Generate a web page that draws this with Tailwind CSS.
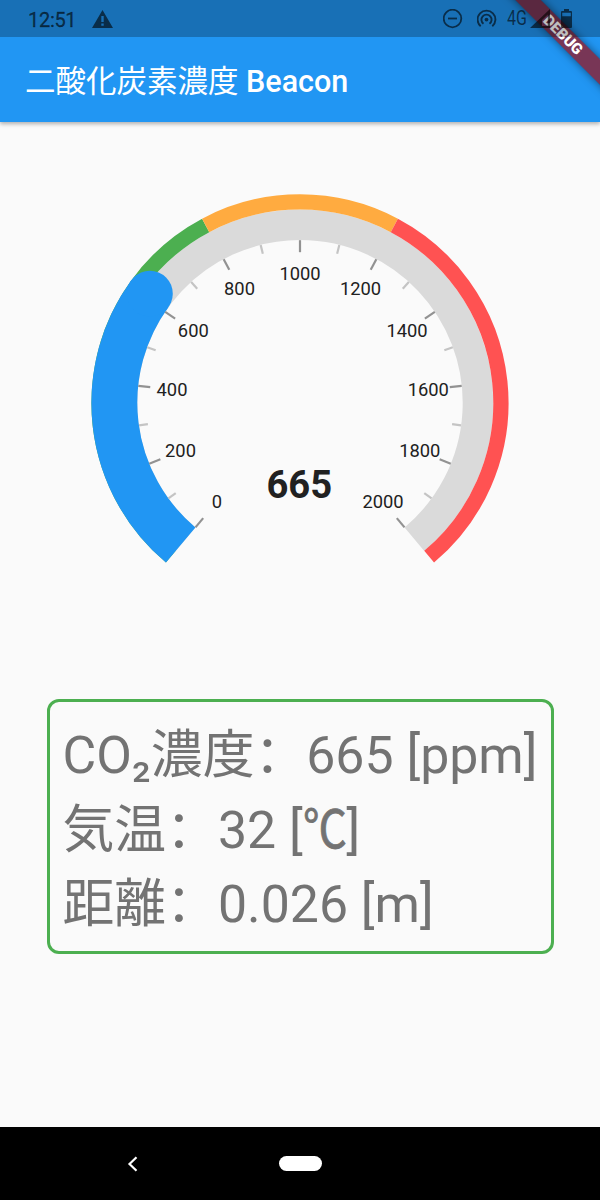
<!DOCTYPE html>
<html lang="ja">
<head>
  <meta charset="UTF-8">
  <meta name="viewport" content="width=device-width, initial-scale=1.0">
  <title>二酸化炭素濃度 Beacon</title>
  <script src="https://cdn.jsdelivr.net/npm/@tailwindcss/browser@4"></script>
</head>
<body class="relative flex flex-col h-[1200px] w-[600px] overflow-hidden bg-[#fafafa] font-['Roboto','Noto_Sans_CJK_SC',sans-serif]">

  <!-- app bar -->
  <header class="flex items-center h-[122px] shrink-0 bg-[#2196f3] pt-[37px] pl-[25px] shadow-[0_2px_4px_rgba(0,0,0,0.3)]">
    <h1 class="text-[30.5px] font-medium leading-none text-white whitespace-nowrap pt-[5px]"><span class="font-normal">二酸化炭素濃度</span> Beacon</h1>
  </header>

  <!-- debug ribbon -->
  <div class="absolute right-0 top-0 w-[160px] h-[120px] overflow-hidden">
    <div class="absolute left-[23.5px] top-[27.35px] w-[200px] h-[18.3px] rotate-45 bg-[#951521]/75 shadow-[0_0_9px_rgba(0,0,0,0.5)] text-center text-[15.2px] leading-[18.3px] font-black text-white pr-[3px]">DEBUG</div>
  </div>

  <!-- status bar, translucent over the app -->
  <div class="absolute top-0 left-0 flex items-center h-[37px] w-full bg-black/25 pl-7 pr-[28px]">
    <span class="text-[20px] leading-none pt-[2px] w-[64px] text-black/60 tracking-[-0.3px] [-webkit-text-stroke:0.3px]">12:51</span>
    <svg class="w-[21px] h-[18px] text-black/60" viewBox="0 0 21 18">
      <path fill="currentColor" fill-rule="evenodd" d="M10.5 0 21 18H0zM9.3 6v6h2.4V6zM9.3 13.5v2.2h2.4v-2.2z"/>
    </svg>
    <div class="flex items-center ml-auto text-black/60">
      <svg class="w-5 h-5" viewBox="0 0 20 20" fill="none" stroke="currentColor" stroke-width="1.8">
        <circle cx="9.5" cy="9.5" r="8.8"/>
        <path d="M5 9.5h9"/>
      </svg>
      <svg class="w-5 h-5 ml-[14px]" viewBox="0 0 20 20" fill="none" stroke="currentColor" stroke-width="1.9">
        <circle cx="9.5" cy="10.6" r="1.9" fill="currentColor" stroke="none"/>
        <path d="M6.500 14.800a5.100 5.100 0 1 1 6 0"/>
        <path d="M3.700 17.300A8.900 8.900 0 1 1 15.300 17.300"/>
      </svg>
      <span class="ml-[10px] w-[23px] text-[19.5px] leading-none whitespace-nowrap origin-left scale-x-82">4G</span>
      <svg class="w-5 h-5" viewBox="0 0 20 20">
        <path fill="currentColor" fill-rule="evenodd" d="M0 19 20 0v19zM17.800 5.500 12 11v6h5.800z"/>
      </svg>
      <svg class="w-[11px] h-[19px] ml-[11px]" viewBox="0 0 11 19">
        <path fill="currentColor" fill-rule="evenodd" d="M3 0h5v2h2q1 0 1 1v15q0 1-1 1H1q-1 0-1-1V3q0-1 1-1h2zM1.200 3.800v3.400h8.600V3.800z"/>
      </svg>
    </div>
  </div>

  <main class="flex flex-col grow">
    <svg class="w-[600px] h-[500px] shrink-0" viewBox="0 122 600 500">
      <g id="arcs" fill="none"></g>
      <g id="ticks"></g>
      <g class="text-[18.33px]" fill="#212121" text-anchor="middle">
        <text x="217" y="507.5">0</text>
        <text x="180.5" y="457">200</text>
        <text x="172" y="395.6">400</text>
        <text x="193.3" y="336.8">600</text>
        <text x="239.5" y="295">800</text>
        <text x="300" y="280">1000</text>
        <text x="360.5" y="295">1200</text>
        <text x="407" y="336.8">1400</text>
        <text x="428.3" y="395.6">1600</text>
        <text x="419.8" y="457">1800</text>
        <text x="383" y="507.5">2000</text>
      </g>
      <text x="299.3" y="498" class="text-[38.2px] font-bold" fill="#212121" text-anchor="middle">665</text>
    </svg>

    <div class="mx-auto mt-[77px] w-[507px] h-[255px] shrink-0 rounded-[12px] border-3 border-[#4caf50] pt-[17px] pl-[13px] text-[51.8px] leading-[74.7px] text-[#737373] whitespace-nowrap">
      <p>CO₂濃度<span lang="zh-Hans">：</span>665 [ppm]</p>
      <p>気温<span lang="zh-Hans">：</span>32 [<span class="inline-block origin-left scale-x-85 mr-[-8px] [-webkit-text-stroke:0.8px]">℃</span>]</p>
      <p>距離<span lang="zh-Hans">：</span>0.026 [m]</p>
    </div>
  </main>

  <!-- navigation bar -->
  <nav class="flex items-center h-[73px] shrink-0 bg-black">
    <svg class="w-3 h-4 ml-[126px]" viewBox="0 0 12 16" fill="none" stroke="white" stroke-width="2.2">
      <path d="M10.5 1.2 3.5 8l7 6.8"/>
    </svg>
    <div class="ml-[141px] w-[43px] h-[15px] rounded-full bg-white"></div>
  </nav>

  <script>
    const NS = 'http://www.w3.org/2000/svg';
    const CX = 300, CY = 402.8;
    const START = 130, SWEEP = 280, MAX = 2000;

    function point(r, deg) {
      const a = deg * Math.PI / 180;
      return [CX + r * Math.cos(a), CY + r * Math.sin(a)];
    }

    function angle(value) {
      return START + value / MAX * SWEEP;
    }

    function add(parent, tag, attrs) {
      const el = document.createElementNS(NS, tag);
      for (const key in attrs) el.setAttribute(key, attrs[key]);
      document.getElementById(parent).appendChild(el);
    }

    function arc(r, width, from, to, color) {
      const large = to - from > 180 ? 1 : 0;
      const d = `M${point(r, from)} A${r} ${r} 0 ${large} 1 ${point(r, to)}`;
      add('arcs', 'path', { d, stroke: color, 'stroke-width': width });
    }

    arc(178, 30.6, angle(0), angle(2000), '#dadada');
    arc(200.9, 15.3, angle(0), angle(800), '#4caf50');
    arc(200.9, 15.3, angle(800), angle(1200), '#ffab40');
    arc(200.9, 15.3, angle(1200), angle(2000), '#ff5252');

    // the round cap stays inside the value, so the arc stops half a width early
    const end = angle(665) - 22.95 / 185.65 * 180 / Math.PI;
    arc(185.65, 45.9, angle(0), end, '#2196f3');
    const [capX, capY] = point(185.65, end);
    add('arcs', 'circle', { cx: capX, cy: capY, r: 22.95, fill: '#2196f3' });

    for (let v = 0; v <= MAX; v += 100) {
      const major = v % 200 === 0;
      const [x1, y1] = point(162.6, angle(v));
      const [x2, y2] = point(162.6 - (major ? 12 : 9), angle(v));
      add('ticks', 'line', { x1, y1, x2, y2, stroke: major ? '#929292' : '#c4c4c4', 'stroke-width': 2.2 });
    }
  </script>
</body>
</html>
